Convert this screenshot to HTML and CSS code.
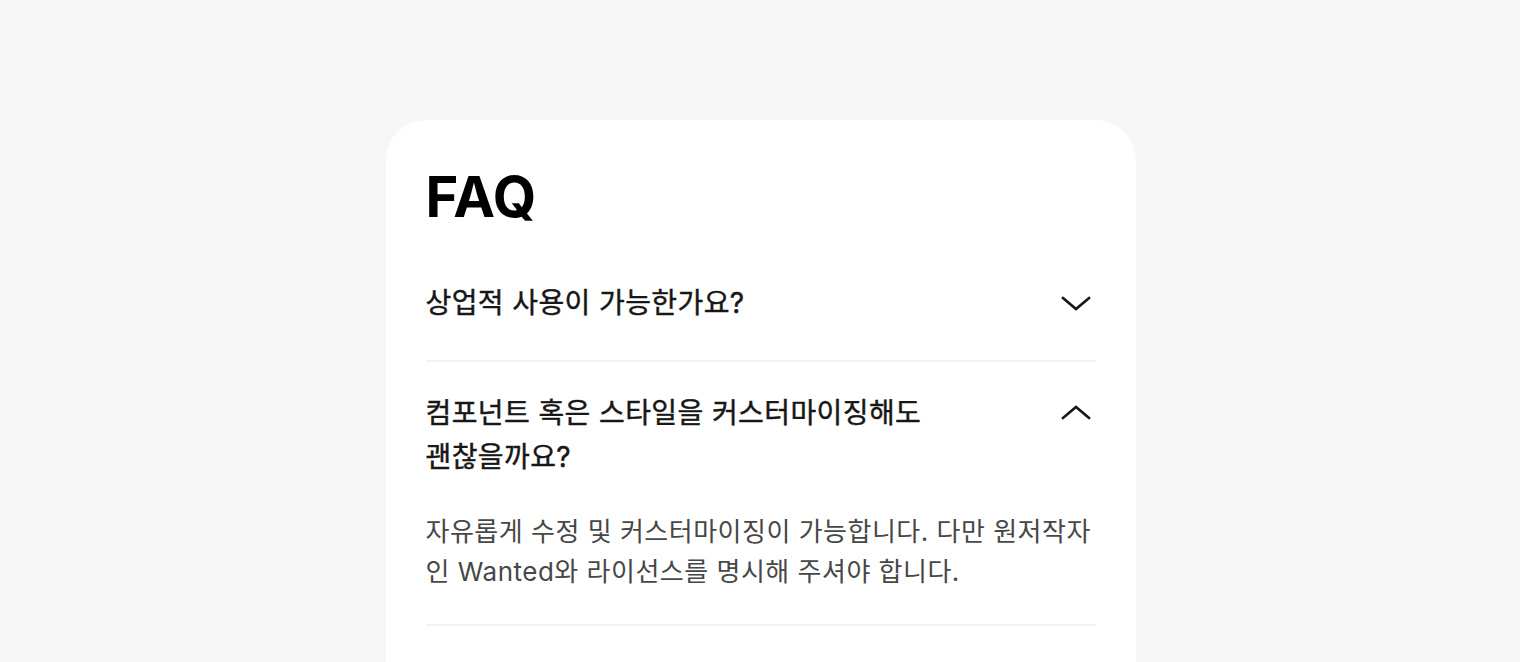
FILE: index.html
```html
<!DOCTYPE html>
<html lang="ko">
<head>
<meta charset="utf-8">
<title>FAQ</title>
<link rel="stylesheet" href="styles.css">
</head>
<body>
<main class="page">
  <section class="card">
    <h1 class="title">FAQ</h1>
    <ul class="faq">
      <li class="item">
        <div class="question">
          <span class="q-text">상업적 사용이 가능한가요?</span>
          <svg class="chev" viewBox="0 0 32 16" width="32" height="16"><path d="M3 3 L16 14 L29 3" fill="none" stroke="#171717" stroke-width="2.6" stroke-linecap="square"/></svg>
        </div>
      </li>
      <li class="item open">
        <div class="question">
          <span class="q-text">컴포넌트 혹은 스타일을 커스터마이징해도 괜찮을까요?</span>
          <svg class="chev" viewBox="0 0 32 16" width="32" height="16"><path d="M3 13 L16 2 L29 13" fill="none" stroke="#171717" stroke-width="2.6" stroke-linecap="square"/></svg>
        </div>
        <p class="answer">자유롭게 수정 및 커스터마이징이 가능합니다. 다만 원저작자인 Wanted와 라이선스를 명시해 주셔야 합니다.</p>
      </li>
    </ul>
  </section>
</main>
</body>
</html>
```

FILE: styles.css
```css
html, body {
  margin: 0;
  padding: 0;
}
body {
  background: #f7f7f7;
  font-family: Inter, "Noto Sans CJK KR", sans-serif;
  color: #171717;
}
.page {
  padding-top: 120px;
  display: flex;
  justify-content: center;
}
.card {
  width: 750px;
  box-sizing: border-box;
  background: #ffffff;
  border-radius: 40px;
  padding: 37px 40px 80px;
  margin-left: 1px;
}
.title {
  margin: 0;
  font-size: 56px;
  font-weight: 700;
  line-height: 80px;
  letter-spacing: 0;
  color: #000;
}
.faq {
  list-style: none;
  margin: 0;
  padding: 0;
}
.item {
  border-bottom: 2px solid #f2f2f2;
  padding: 29px 0 32px;
}
.item:first-child {
  padding: 44px 0 35px;
}
.question {
  display: flex;
  justify-content: space-between;
  align-items: flex-start;
}
.q-text {
  font-family: Inter, "Noto Sans CJK KR", sans-serif;
  font-size: 28px;
  font-weight: 400;
  -webkit-text-stroke: 0.45px #171717;
  line-height: 44px;
  max-width: 520px;
  color: #171717;
  letter-spacing: 0.4px;
  word-break: keep-all;
}
.chev {
  margin-top: 14px;
  margin-right: 4px;
  flex: none;
}
.answer {
  margin: 33px 0 0;
  font-family: Inter, "Noto Sans CJK KR", sans-serif;
  font-size: 26px;
  font-weight: 400;
  line-height: 40px;
  color: #474747;
  letter-spacing: 0.5px;
}
```
